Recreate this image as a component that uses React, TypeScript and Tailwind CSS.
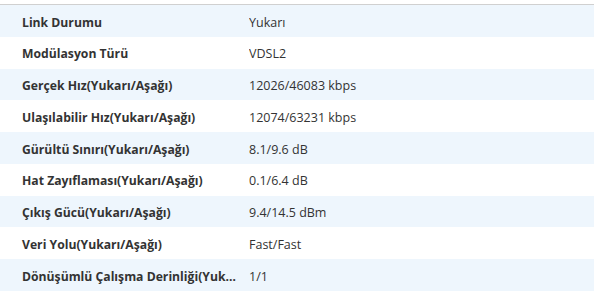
const rows: [string, string][] = [
  ["Link Durumu", "Yukarı"],
  ["Modülasyon Türü", "VDSL2"],
  ["Gerçek Hız(Yukarı/Aşağı)", "12026/46083 kbps"],
  ["Ulaşılabilir Hız(Yukarı/Aşağı)", "12074/63231 kbps"],
  ["Gürültü Sınırı(Yukarı/Aşağı)", "8.1/9.6 dB"],
  ["Hat Zayıflaması(Yukarı/Aşağı)", "0.1/6.4 dB"],
  ["Çıkış Gücü(Yukarı/Aşağı)", "9.4/14.5 dBm"],
  ["Veri Yolu(Yukarı/Aşağı)", "Fast/Fast"],
  ["Dönüşümlü Çalışma Derinliği(Yukarı/Aşağı)", "1/1"],
];

export default function App() {
  return (
    <div className="w-[594px] h-[298px] bg-white pt-1 font-['Open_Sans',sans-serif] text-[12.5px] text-[#333]">
      {/* Status table */}
      <div className="border-t border-[#d0d0d0]">
        {rows.map(([label, value], i) => (
          <div
            key={label}
            className={`flex items-center h-[31.75px] pt-[4px] ${i % 2 === 0 ? "bg-[#eef6fd]" : "bg-white"}`}
          >
            <div className="w-[249px] pl-[22px] pr-[6px] font-bold text-[12.2px] truncate">{label}</div>
            <div className="flex-1 truncate">{value}</div>
          </div>
        ))}
      </div>
    </div>
  );
}
